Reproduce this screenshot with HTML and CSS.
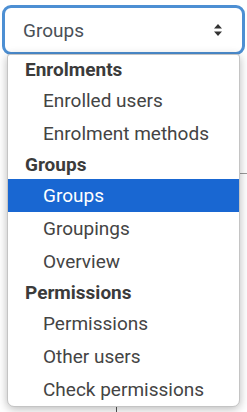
FILE: index.html
```html
<!DOCTYPE html>
<html lang="en">
<head>
    <meta charset="UTF-8">
    <meta name="viewport" content="width=device-width, initial-scale=1.0">
    <title>Groups</title>
    <link rel="stylesheet" href="styles.css">
</head>
<body>
    <div class="field">
        <div class="select">
            <span>Groups</span>
            <svg class="arrows" width="8" height="12" viewBox="0 0 8 12">
                <path d="M4 0 L8 4.5 L0 4.5 Z M0 7.5 L8 7.5 L4 12 Z" fill="#333"/>
            </svg>
        </div>

        <ul class="dropdown">
            <li class="group">Enrolments</li>
            <li class="option">Enrolled users</li>
            <li class="option">Enrolment methods</li>
            <li class="group">Groups</li>
            <li class="option selected">Groups</li>
            <li class="option">Groupings</li>
            <li class="option">Overview</li>
            <li class="group">Permissions</li>
            <li class="option">Permissions</li>
            <li class="option">Other users</li>
            <li class="option">Check permissions</li>
        </ul>
    </div>

    <!-- page behind the open menu -->
    <div class="page-rule"></div>
    <div class="page-col"></div>
</body>
</html>
```

FILE: styles.css
```css
body {
    font-family: 'Roboto', 'Liberation Sans', sans-serif;
    background-color: #fff;
    margin: 0;
    width: 247px;
    height: 412px;
    overflow: hidden;
}

.field {
    position: relative;
    margin: 5px 2px 0;
}

.select {
    box-sizing: border-box;
    height: 50px;
    border: 3px solid #4d8fd3;
    border-radius: 9px;
    display: flex;
    align-items: center;
    justify-content: space-between;
    padding: 0 20px 0 18px;
    font-size: 19px;
    color: #495057;
}

.arrows {
    display: block;
}

.dropdown {
    position: absolute;
    left: 5px;
    top: 49px;
    width: 231px;
    margin: 0;
    padding: 0;
    list-style: none;
    background-color: #fff;
    border: 1px solid #c4c4c4;
    border-radius: 3px 3px 7px 7px;
    box-shadow: 0 2px 10px rgba(0, 0, 0, 0.28);
    font-size: 19px;
    color: #444;
}

.group {
    height: 29px;
    display: flex;
    align-items: center;
    padding-left: 17px;
    font-weight: bold;
    color: #3b3b3b;
}

.option {
    height: 33px;
    display: flex;
    align-items: center;
    padding-left: 35px;
}

.selected {
    background-color: #1967d2;
    color: #fff;
}

.page-rule {
    margin: 118px 0 0 116px;
    height: 1px;
    background-color: #999;
}

.page-col {
    margin-left: 116px;
    width: 1px;
    height: 240px;
    background-color: #555;
}
```
